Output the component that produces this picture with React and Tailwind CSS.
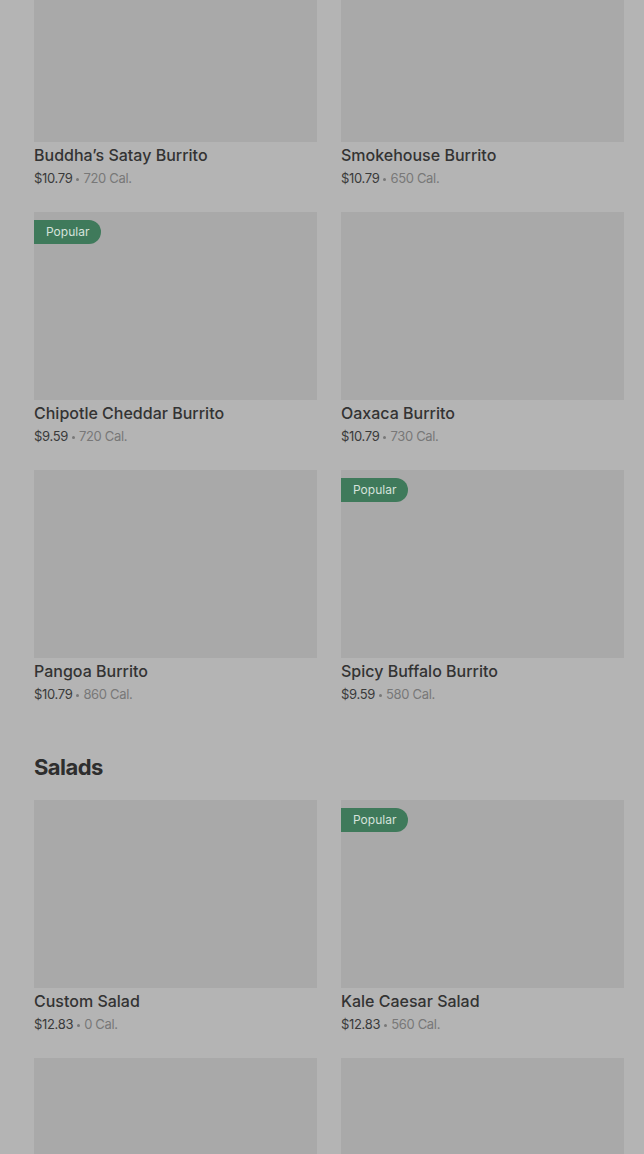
const burritos = [
	{ name: "Buddha’s Satay Burrito", price: "$10.79", cal: "720 Cal." },
	{ name: "Smokehouse Burrito", price: "$10.79", cal: "650 Cal." },
	{ name: "Chipotle Cheddar Burrito", price: "$9.59", cal: "720 Cal.", popular: true },
	{ name: "Oaxaca Burrito", price: "$10.79", cal: "730 Cal." },
	{ name: "Pangoa Burrito", price: "$10.79", cal: "860 Cal." },
	{ name: "Spicy Buffalo Burrito", price: "$9.59", cal: "580 Cal.", popular: true },
]

const salads = [
	{ name: "Custom Salad", price: "$12.83", cal: "0 Cal." },
	{ name: "Kale Caesar Salad", price: "$12.83", cal: "560 Cal.", popular: true },
	{ name: "", price: "", cal: "" },
	{ name: "", price: "", cal: "" },
]

function Item({ item }) {
	return (
		<div className="flex flex-col">
			<div className="relative h-[188px] bg-[#a9a9a9]">
				{item.popular && (
					<span className="absolute left-0 top-2 h-6 pl-3 pr-3 flex items-center rounded-r-full bg-[#3f7a5b] text-[12px] text-[#d6e2dc]">
						Popular
					</span>
				)}
			</div>
			{item.name && (
				<>
					<div className="mt-[3px] leading-5 text-[16px] font-medium text-[#333333]">
						{item.name}
					</div>
					<div className="mt-[5px] h-[18px] flex items-center text-[13px] tracking-tight">
						<span className="text-[#3a3a3a]">{item.price}</span>
						<span className="mx-[4px] w-[3px] h-[3px] rounded-full bg-[#787878]" />
						<span className="text-[#787878]">{item.cal}</span>
					</div>
				</>
			)}
		</div>
	)
}

export default function App() {
	return (
		<div
			className="h-[1154px] overflow-hidden bg-[#b4b4b4] pl-[34px] pr-[20px]"
			style={{ fontFamily: "Inter, 'Noto Sans', sans-serif" }}>
			<div className="-mt-[46px] grid grid-cols-2 gap-x-6 gap-y-6">
				{burritos.map((b, i) => (
					<Item key={i} item={b} />
				))}
			</div>
			<h2 className="mt-[49px] mb-[19px] leading-7 text-[22px] font-bold text-[#2e2e2e] tracking-tight">
				Salads
			</h2>
			<div className="grid grid-cols-2 gap-x-6 gap-y-6">
				{salads.map((s, i) => (
					<Item key={i} item={s} />
				))}
			</div>
		</div>
	)
}
